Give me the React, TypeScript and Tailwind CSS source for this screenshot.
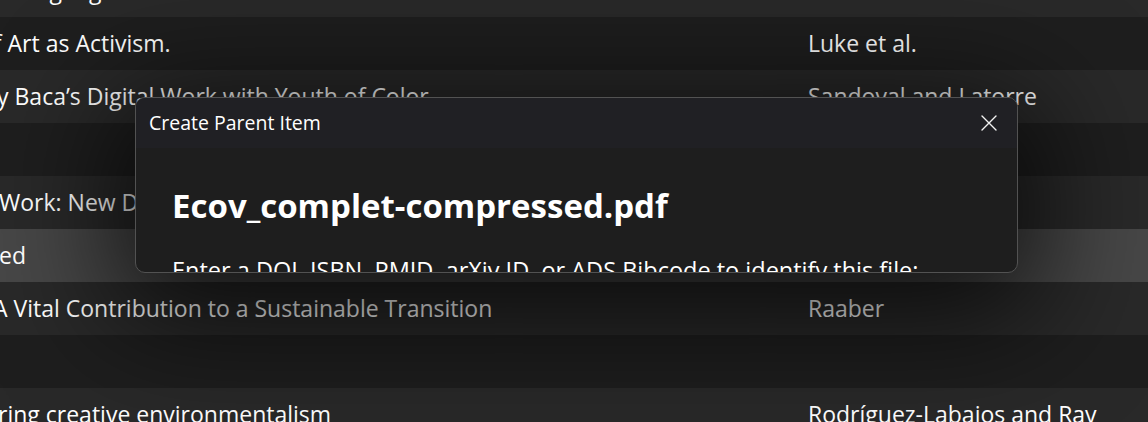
const rows = [
  { title: 'e language for transformative social action', shift: '-ml-[2px]', author: 'Aldare-Ríos et al.', tone: 'light' },
  { title: 'of Art as Activism.', shift: '-ml-[20px]', author: 'Luke et al.', tone: 'dark' },
  { title: 'y Baca’s Digital Work with Youth of Color', shift: '-ml-[3px]', author: 'Sandoval and Latorre', tone: 'light' },
  { title: '', shift: '', author: '', tone: 'dark' },
  { title: 'Work: New Directions in Digital Media', shift: '-ml-[1px]', author: 'Harris and Brown', tone: 'light' },
  { title: 'ed', shift: '-ml-[1px]', author: '', tone: 'selected' },
  { title: 'A Vital Contribution to a Sustainable Transition', shift: '-ml-[7px]', author: 'Raaber', tone: 'light' },
  { title: '', shift: '', author: '', tone: 'dark' },
  { title: 'ring creative environmentalism', shift: '-ml-[2px]', author: 'Rodríguez-Labajos and Ray', tone: 'light' },
]

const toneClass: Record<string, string> = {
  light: 'bg-[#292929]',
  dark: 'bg-[#1e1e1e]',
  selected: 'bg-[#474747]',
}

function CloseIcon() {
  return (
    <svg width="16" height="16" viewBox="0 0 16 16" fill="none">
      <path d="M1 1L15 15M15 1L1 15" stroke="#f2f2f2" strokeWidth="1.4" strokeLinecap="round" />
    </svg>
  )
}

export default function App() {
  return (
    <div className="relative w-[1148px] h-[422px] overflow-hidden bg-[#1e1e1e] text-white font-['Open_Sans',sans-serif]">
      <div className="flex flex-col -mt-[36px]">
        {rows.map((r, i) => (
          <div key={i} className={`flex items-center h-[53px] shrink-0 ${toneClass[r.tone]}`}>
            <div className="w-[808px] overflow-hidden whitespace-nowrap">
              <span className={`block text-[23px] ${r.shift}`}>{r.title}</span>
            </div>
            <div className="flex-1 whitespace-nowrap text-[23px]">{r.author}</div>
          </div>
        ))}
      </div>

      {/* modal dialog */}
      <div className="absolute left-[135px] top-[97px] w-[883px] h-[176px] rounded-[10px] border-[1.5px] border-[#525252] bg-[#1e1e1e] overflow-hidden shadow-[0_24px_120px_20px_rgba(0,0,0,0.75)]">
        <div className="flex items-center justify-between h-[50px] bg-[#202024] pl-[13px] pr-[20px]">
          <span className="text-[19.5px]">Create Parent Item</span>
          <CloseIcon />
        </div>
        <div className="pl-[36px] pt-[38px]">
          <h1 className="text-[33px] font-bold leading-[40px] whitespace-nowrap">Ecov_complet-compressed.pdf</h1>
          <p className="mt-[28px] text-[23.5px] leading-[32px] whitespace-nowrap">
            Enter a DOI, ISBN, PMID, arXiv ID, or ADS Bibcode to identify this file:
          </p>
        </div>
      </div>
    </div>
  )
}
